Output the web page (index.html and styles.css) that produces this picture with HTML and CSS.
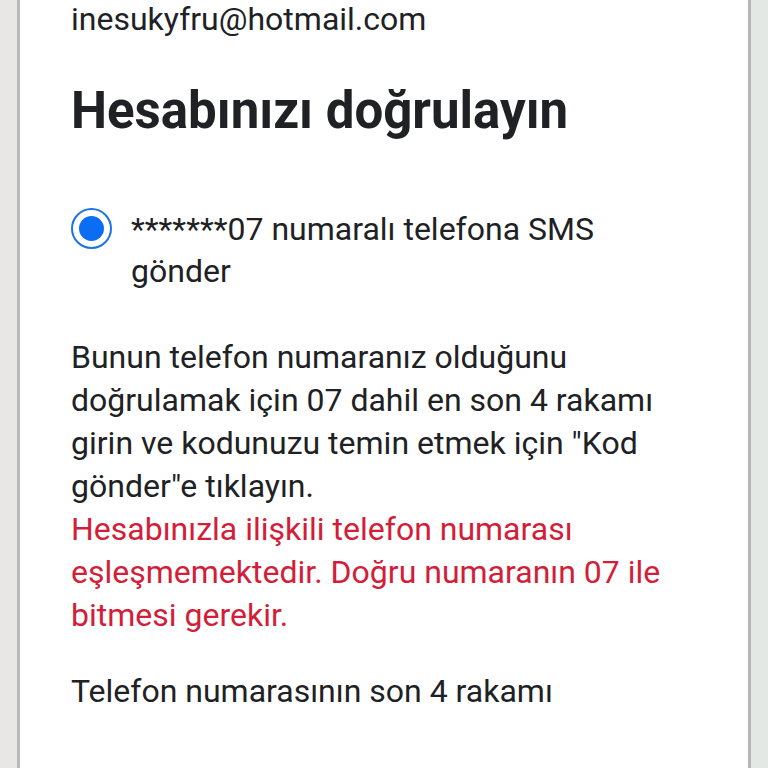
FILE: index.html
```html
<!DOCTYPE html>
<html lang="tr">
<head>
  <meta charset="UTF-8">
  <title>Hesabınızı doğrulayın</title>
  <meta name="viewport" content="width=device-width, initial-scale=1.0">
  <link rel="stylesheet" href="styles.css">
</head>
<body>

<div class="page">
  <div class="card">
    <div class="email">inesukyfru@hotmail.com</div>

    <h1 class="title">Hesabınızı doğrulayın</h1>

    <label class="option">
      <span class="radio"><span class="dot"></span></span>
      <span class="option-text">*******07 numaralı telefona SMS gönder</span>
    </label>

    <p class="info">Bunun telefon numaranız olduğunu doğrulamak için 07 dahil en son 4 rakamı girin ve kodunuzu temin etmek için "Kod gönder"e tıklayın.</p>
    <p class="error">Hesabınızla ilişkili telefon numarası eşleşmemektedir. Doğru numaranın 07 ile bitmesi gerekir.</p>

    <div class="field-label">Telefon numarasının son 4 rakamı</div>
  </div>
</div>

</body>
</html>
```

FILE: styles.css
```css
body {
  margin: 0;
  font-family: Roboto, "Noto Sans", sans-serif;
  background: linear-gradient(to right, #e9e7e5, #e4e8e4);
  color: #202124;
  height: 768px;
  overflow: hidden;
}

.page {
  display: flex;
  justify-content: flex-start;
  padding-left: 17px;
}

.card {
  width: 677px;
  min-height: 800px;
  background: #fff;
  border-left: 3px solid #b9b9b9;
  border-right: 3px solid #b4b6b4;
  padding: 0 0 0 51px;
}

.email {
  font-size: 32px;
  line-height: 43px;
  margin-top: -2px;
}

.title {
  font-size: 51px;
  font-weight: 700;
  line-height: 60px;
  margin: 40px 0 0;
}

.option {
  display: flex;
  align-items: flex-start;
  gap: 19px;
  margin-top: 67px;
  font-size: 32px;
  line-height: 42px;
}

.radio {
  flex: none;
  width: 37px;
  height: 37px;
  border: 2.5px solid #1a73e8;
  border-radius: 50%;
  display: flex;
  align-items: center;
  justify-content: center;
}

.dot {
  width: 25px;
  height: 25px;
  border-radius: 50%;
  background: #0b6cf4;
}

.option-text {
  max-width: 490px;
}

.info, .error {
  font-size: 32px;
  line-height: 43px;
  margin: 0;
  max-width: 610px;
}

.info {
  margin-top: 44px;
}

.error {
  color: #d31d39;
}

.field-label {
  font-size: 32px;
  line-height: 43px;
  margin-top: 33px;
}
```
